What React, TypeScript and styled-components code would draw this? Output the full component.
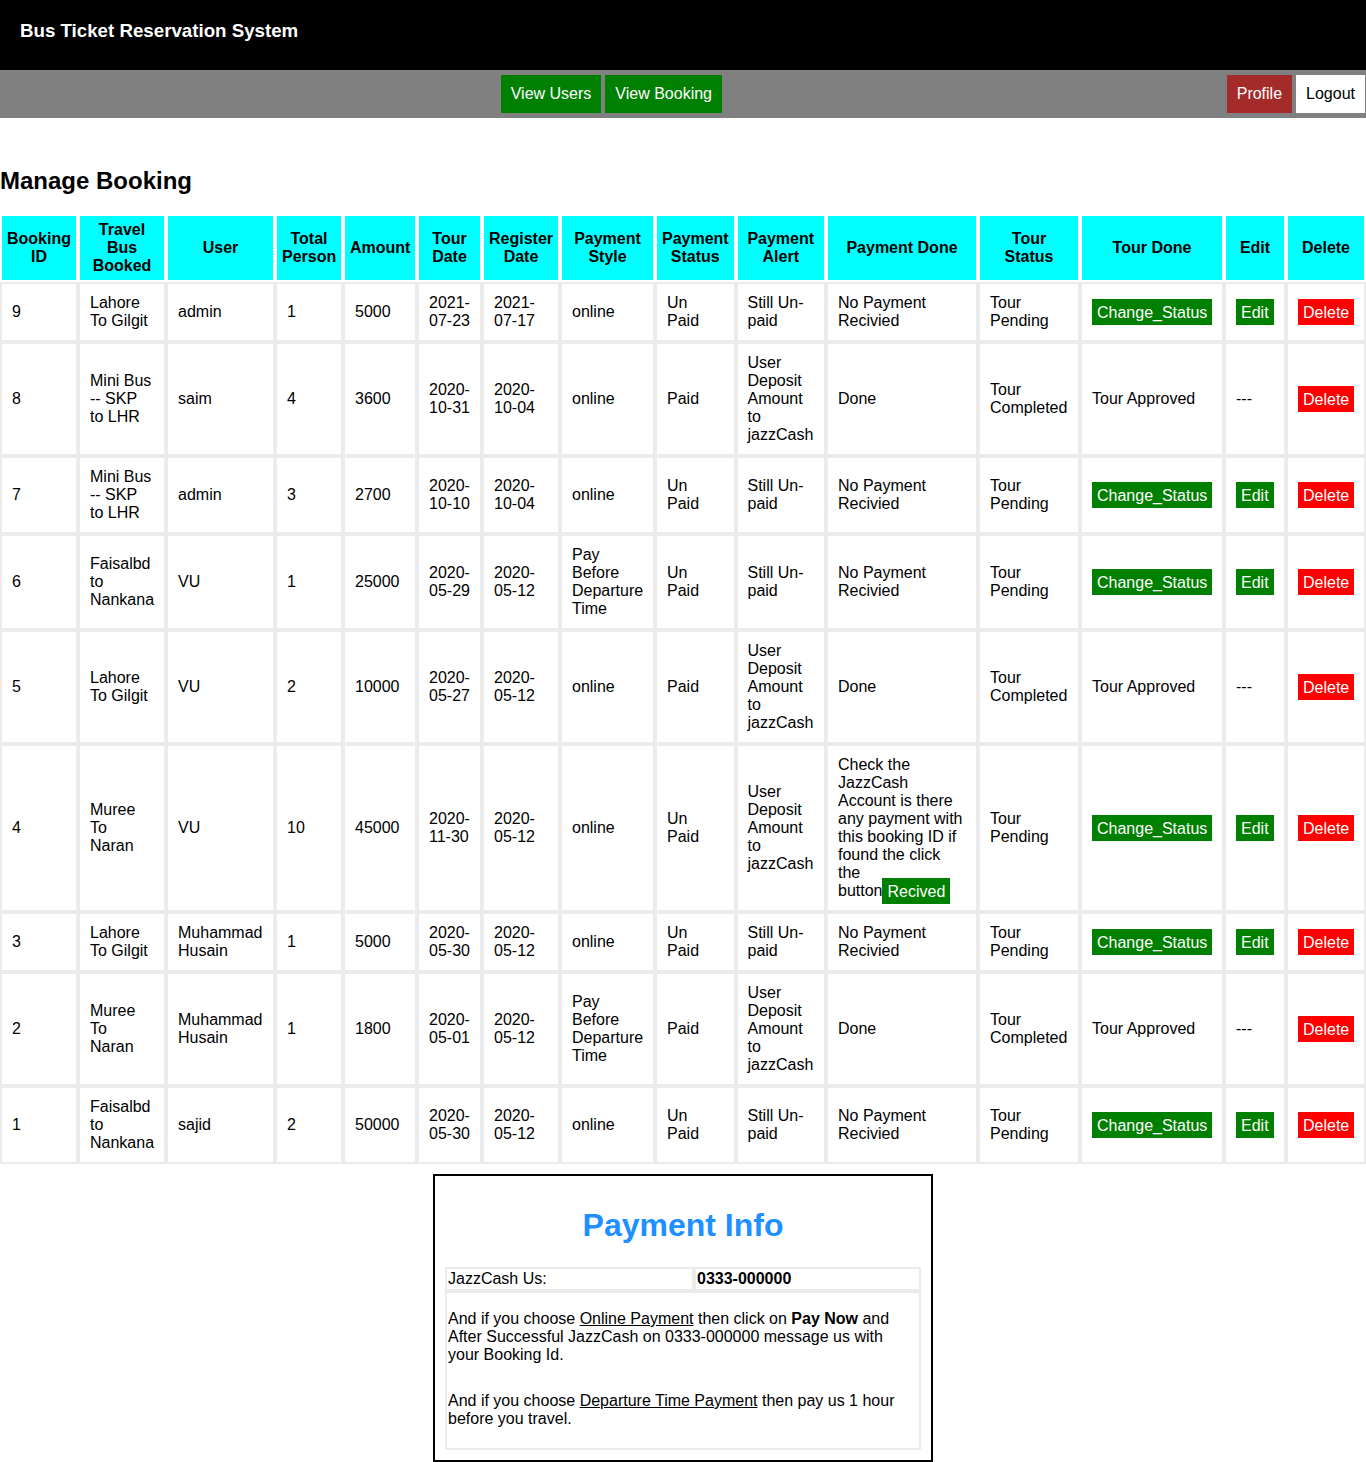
import type { ReactNode } from "react";
import styled, { createGlobalStyle } from "styled-components";

const GlobalStyle = createGlobalStyle`
  body {
    margin: 0;
    font-family: "Liberation Sans", Arial, sans-serif;
    font-size: 16px;
    line-height: 1.125;
    color: #000;
    background: #fff;
  }
`;

const Header = styled.header`
  height: 70px;
  box-sizing: border-box;
  padding: 20px 20px 0;
  background: #000;
`;

const Brand = styled.h3`
  margin: 0;
  font-size: 18.72px;
  font-weight: bold;
  color: #fff;
`;

const NavBar = styled.nav`
  display: flex;
  align-items: center;
  height: 48px;
  box-sizing: border-box;
  padding: 5px 0;
  background: #808080;
`;

const NavCenter = styled.div`
  flex: 1;
  display: flex;
  justify-content: center;
  gap: 4px;
  padding-right: 4px;
`;

const NavRight = styled.div`
  display: flex;
  gap: 4px;
  margin-right: 1px;
`;

const tones = {
  green: { bg: "#008000", fg: "#fff" },
  brown: { bg: "#a52a2a", fg: "#fff" },
  white: { bg: "#fff", fg: "#000" },
  red: { bg: "#ff0000", fg: "#fff" },
};

type Tone = keyof typeof tones;

const NavLink = styled.a<{ $tone: Tone }>`
  display: block;
  padding: 10px;
  background: ${(p) => tones[p.$tone].bg};
  color: ${(p) => tones[p.$tone].fg};
  text-decoration: none;
  cursor: pointer;
`;

const PageTitle = styled.h2`
  margin: 49px 0 20px;
  font-size: 24px;
  line-height: 27px;
  font-weight: bold;
`;

const BookingTable = styled.table`
  width: 100%;
  table-layout: fixed;
  border-collapse: separate;
  border-spacing: 0;
`;

const Col = styled.col<{ $w: number }>`
  width: ${(p) => p.$w}px;
`;

const HeadCell = styled.th`
  padding: 5px;
  border: 2px solid #fff;
  background: #00ffff;
  font-weight: bold;
  text-align: center;
  vertical-align: middle;
  white-space: pre-line;
`;

const Cell = styled.td`
  padding: 10px;
  border: 2px solid #ebebeb;
  text-align: left;
  vertical-align: middle;
`;

const Tag = styled.a<{ $tone: Tone }>`
  padding: 4.5px 5px;
  background: ${(p) => tones[p.$tone].bg};
  color: ${(p) => tones[p.$tone].fg};
  text-decoration: none;
  cursor: pointer;
`;

const InfoBox = styled.section`
  width: 500px;
  box-sizing: border-box;
  margin: 10px auto 0;
  padding: 10px;
  border: 2px solid #000;
`;

const InfoTitle = styled.h1`
  margin: 21px 0 24px;
  font-size: 32px;
  line-height: 36px;
  font-weight: bold;
  text-align: center;
  color: #1e90ff;
`;

const InfoTable = styled.table`
  width: 100%;
  table-layout: fixed;
  border-collapse: separate;
  border-spacing: 0;
`;

const InfoCell = styled.td<{ $bold?: boolean }>`
  padding: 1px;
  border: 2px solid #ebebeb;
  font-weight: ${(p) => (p.$bold ? "bold" : "normal")};
  vertical-align: middle;
`;

const Note = styled.p<{ $top: number; $bottom: number }>`
  margin: ${(p) => p.$top}px 0 ${(p) => p.$bottom}px;
`;

const Underlined = styled.a`
  color: inherit;
  text-decoration: underline;
`;

// header label, column width (border box)
const columns: [string, number][] = [
  ["Booking ID", 78],
  ["Travel Bus Booked", 88],
  ["User", 109],
  ["Total Person", 68],
  ["Amount", 74],
  ["Tour Date", 65],
  ["Register Date", 78],
  ["Payment Style", 95],
  ["Payment Status", 80.5],
  ["Payment Alert", 90.5],
  ["Payment Done", 152],
  ["Tour\nStatus", 102],
  ["Tour Done", 144],
  ["Edit", 62],
  ["Delete", 80],
];

type Booking = {
  id: number;
  bus: string;
  user: string;
  persons: number;
  amount: number;
  tourDate: string;
  regDate: string;
  style: string;
  status: string;
  alert: string;
  done: ReactNode;
  tourStatus: string;
  approved: boolean;
};

const deposit = "User Deposit Amount to jazzCash";
const before = "Pay Before Departure Time";

const bookings: Booking[] = [
  { id: 9, bus: "Lahore To Gilgit", user: "admin", persons: 1, amount: 5000, tourDate: "2021-07-23", regDate: "2021-07-17", style: "online", status: "Un Paid", alert: "Still Un-paid", done: "No Payment Recivied", tourStatus: "Tour Pending", approved: false },
  { id: 8, bus: "Mini Bus -- SKP to LHR", user: "saim", persons: 4, amount: 3600, tourDate: "2020-10-31", regDate: "2020-10-04", style: "online", status: "Paid", alert: deposit, done: "Done", tourStatus: "Tour Completed", approved: true },
  { id: 7, bus: "Mini Bus -- SKP to LHR", user: "admin", persons: 3, amount: 2700, tourDate: "2020-10-10", regDate: "2020-10-04", style: "online", status: "Un Paid", alert: "Still Un-paid", done: "No Payment Recivied", tourStatus: "Tour Pending", approved: false },
  { id: 6, bus: "Faisalbd to Nankana", user: "VU", persons: 1, amount: 25000, tourDate: "2020-05-29", regDate: "2020-05-12", style: before, status: "Un Paid", alert: "Still Un-paid", done: "No Payment Recivied", tourStatus: "Tour Pending", approved: false },
  { id: 5, bus: "Lahore To Gilgit", user: "VU", persons: 2, amount: 10000, tourDate: "2020-05-27", regDate: "2020-05-12", style: "online", status: "Paid", alert: deposit, done: "Done", tourStatus: "Tour Completed", approved: true },
  {
    id: 4, bus: "Muree To Naran", user: "VU", persons: 10, amount: 45000, tourDate: "2020-11-30", regDate: "2020-05-12", style: "online", status: "Un Paid", alert: deposit,
    done: (
      <>
        Check the JazzCash Account is there any payment with this booking ID if found the click the button<Tag $tone="green">Recived</Tag>
      </>
    ),
    tourStatus: "Tour Pending", approved: false,
  },
  { id: 3, bus: "Lahore To Gilgit", user: "Muhammad Husain", persons: 1, amount: 5000, tourDate: "2020-05-30", regDate: "2020-05-12", style: "online", status: "Un Paid", alert: "Still Un-paid", done: "No Payment Recivied", tourStatus: "Tour Pending", approved: false },
  { id: 2, bus: "Muree To Naran", user: "Muhammad Husain", persons: 1, amount: 1800, tourDate: "2020-05-01", regDate: "2020-05-12", style: before, status: "Paid", alert: deposit, done: "Done", tourStatus: "Tour Completed", approved: true },
  { id: 1, bus: "Faisalbd to Nankana", user: "sajid", persons: 2, amount: 50000, tourDate: "2020-05-30", regDate: "2020-05-12", style: "online", status: "Un Paid", alert: "Still Un-paid", done: "No Payment Recivied", tourStatus: "Tour Pending", approved: false },
];

const App = () => {
  return (
    <>
      <GlobalStyle />
      <Header>
        <Brand>Bus Ticket Reservation System</Brand>
      </Header>
      <NavBar>
        <NavCenter>
          <NavLink $tone="green">View Users</NavLink>
          <NavLink $tone="green">View Booking</NavLink>
        </NavCenter>
        <NavRight>
          <NavLink $tone="brown">Profile</NavLink>
          <NavLink $tone="white">Logout</NavLink>
        </NavRight>
      </NavBar>

      <PageTitle>Manage Booking</PageTitle>
      <BookingTable>
        <colgroup>
          {columns.map(([name, w]) => (
            <Col key={name} $w={w} />
          ))}
        </colgroup>
        <thead>
          <tr>
            {columns.map(([name]) => (
              <HeadCell key={name}>{name}</HeadCell>
            ))}
          </tr>
        </thead>
        <tbody>
          {bookings.map((b) => (
            <tr key={b.id}>
              <Cell>{b.id}</Cell>
              <Cell>{b.bus}</Cell>
              <Cell>{b.user}</Cell>
              <Cell>{b.persons}</Cell>
              <Cell>{b.amount}</Cell>
              <Cell>{b.tourDate}</Cell>
              <Cell>{b.regDate}</Cell>
              <Cell>{b.style}</Cell>
              <Cell>{b.status}</Cell>
              <Cell>{b.alert}</Cell>
              <Cell>{b.done}</Cell>
              <Cell>{b.tourStatus}</Cell>
              <Cell>
                {b.approved ? "Tour Approved" : <Tag $tone="green">Change_Status</Tag>}
              </Cell>
              <Cell>{b.approved ? "---" : <Tag $tone="green">Edit</Tag>}</Cell>
              <Cell>
                <Tag $tone="red">Delete</Tag>
              </Cell>
            </tr>
          ))}
        </tbody>
      </BookingTable>

      <InfoBox>
        <InfoTitle>Payment Info</InfoTitle>
        <InfoTable>
          <colgroup>
            <Col $w={249} />
            <col />
          </colgroup>
          <tbody>
            <tr>
              <InfoCell>JazzCash Us:</InfoCell>
              <InfoCell $bold>0333-000000</InfoCell>
            </tr>
            <tr>
              <InfoCell colSpan={2}>
                <Note $top={16} $bottom={0}>
                  And if you choose <Underlined>Online Payment</Underlined> then click on{" "}
                  <b>Pay Now</b> and After Successful JazzCash on 0333-000000 message us with
                  your Booking Id.
                </Note>
                <Note $top={28} $bottom={19}>
                  And if you choose <Underlined>Departure Time Payment</Underlined> then pay us 1
                  hour before you travel.
                </Note>
              </InfoCell>
            </tr>
          </tbody>
        </InfoTable>
      </InfoBox>
    </>
  );
};

export default App;
